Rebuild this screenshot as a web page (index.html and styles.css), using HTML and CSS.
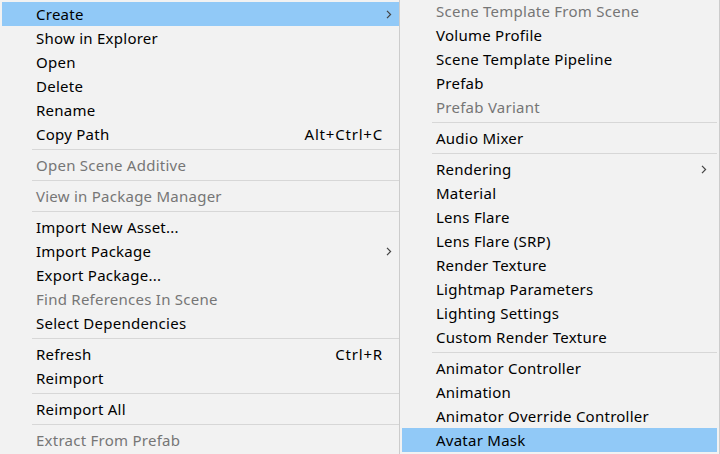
FILE: index.html
```html
<!DOCTYPE html>
<html>
<head>
<meta charset="utf-8">
<link rel="stylesheet" href="styles.css">
</head>
<body>
<div class="screen">
  <div class="menu main">
    <div class="item active"><span class="label">Create</span><span class="arrow"><svg width="6" height="9" viewBox="0 0 6 9"><polyline points="1,0.8 4.6,4.5 1,8.2" fill="none" stroke="#444" stroke-width="1.2"/></svg></span></div>
    <div class="item"><span class="label">Show in Explorer</span></div>
    <div class="item"><span class="label">Open</span></div>
    <div class="item"><span class="label">Delete</span></div>
    <div class="item"><span class="label">Rename</span></div>
    <div class="item"><span class="label">Copy Path</span><span class="shortcut">Alt+Ctrl+C</span></div>
    <div class="sep"></div>
    <div class="item disabled"><span class="label">Open Scene Additive</span></div>
    <div class="sep"></div>
    <div class="item disabled"><span class="label">View in Package Manager</span></div>
    <div class="sep"></div>
    <div class="item"><span class="label">Import New Asset...</span></div>
    <div class="item"><span class="label">Import Package</span><span class="arrow"><svg width="6" height="9" viewBox="0 0 6 9"><polyline points="1,0.8 4.6,4.5 1,8.2" fill="none" stroke="#444" stroke-width="1.2"/></svg></span></div>
    <div class="item"><span class="label">Export Package...</span></div>
    <div class="item disabled"><span class="label">Find References In Scene</span></div>
    <div class="item"><span class="label">Select Dependencies</span></div>
    <div class="sep"></div>
    <div class="item"><span class="label">Refresh</span><span class="shortcut">Ctrl+R</span></div>
    <div class="item"><span class="label">Reimport</span></div>
    <div class="sep"></div>
    <div class="item"><span class="label">Reimport All</span></div>
    <div class="sep"></div>
    <div class="item disabled"><span class="label">Extract From Prefab</span></div>
  </div>

  <div class="menu sub">
    <div class="item disabled"><span class="label">Scene Template From Scene</span></div>
    <div class="item"><span class="label">Volume Profile</span></div>
    <div class="item"><span class="label">Scene Template Pipeline</span></div>
    <div class="item"><span class="label">Prefab</span></div>
    <div class="item disabled"><span class="label">Prefab Variant</span></div>
    <div class="sep"></div>
    <div class="item"><span class="label">Audio Mixer</span></div>
    <div class="sep"></div>
    <div class="item"><span class="label">Rendering</span><span class="arrow"><svg width="6" height="9" viewBox="0 0 6 9"><polyline points="1,0.8 4.6,4.5 1,8.2" fill="none" stroke="#444" stroke-width="1.2"/></svg></span></div>
    <div class="item"><span class="label">Material</span></div>
    <div class="item"><span class="label">Lens Flare</span></div>
    <div class="item"><span class="label">Lens Flare (SRP)</span></div>
    <div class="item"><span class="label">Render Texture</span></div>
    <div class="item"><span class="label">Lightmap Parameters</span></div>
    <div class="item"><span class="label">Lighting Settings</span></div>
    <div class="item"><span class="label">Custom Render Texture</span></div>
    <div class="sep"></div>
    <div class="item"><span class="label">Animator Controller</span></div>
    <div class="item"><span class="label">Animation</span></div>
    <div class="item"><span class="label">Animator Override Controller</span></div>
    <div class="item active"><span class="label">Avatar Mask</span></div>
  </div>
</div>
</body>
</html>
```
FILE: styles.css
```css
html, body {
  margin: 0;
  padding: 0;
  width: 720px;
  height: 454px;
  overflow: hidden;
  background: #f2f2f2;
}

.screen {
  position: relative;
  width: 720px;
  height: 454px;
  overflow: hidden;
  font-family: "Noto Sans", "Noto Sans CJK SC", sans-serif;
  font-size: 15px;
  letter-spacing: 0.25px;
  color: #000;
}

.menu {
  position: absolute;
  background: #f2f2f2;
  border: 1px solid #cccccc;
  padding: 2px;
  display: flex;
  flex-direction: column;
}

.main {
  left: -1px;
  top: -1px;
  width: 400px;
}

.sub {
  left: 399px;
  top: -4px;
  width: 315px;
}

.item {
  height: 24px;
  display: flex;
  align-items: center;
  padding-left: 34px;
  white-space: nowrap;
}

.item .label {
  flex: 1;
}

.item.active {
  background: #91c9f7;
}

.item.disabled {
  color: #767676;
}

.shortcut {
  margin-right: 19px;
  letter-spacing: 0.8px;
}

.arrow {
  display: flex;
  margin-right: 10px;
}

.sep {
  height: 1px;
  margin: 3px 0 3px 30px;
  background: #d7d7d7;
  flex-shrink: 0;
}
```
